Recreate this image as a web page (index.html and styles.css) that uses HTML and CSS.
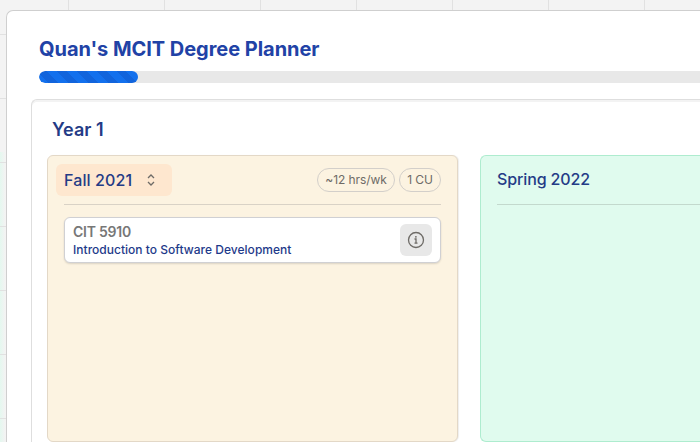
FILE: index.html
```
<!DOCTYPE html>
<html lang="en">
<head>
<meta charset="utf-8">
<title>Quan's MCIT Degree Planner</title>
<link rel="stylesheet" href="styles.css">
</head>
<body>
<main class="planner">
  <h1 class="title">Quan's MCIT Degree Planner</h1>
  <div class="progress"><div class="progress-fill"></div></div>
  <section class="year">
    <h2 class="year-title">Year 1</h2>
    <div class="terms">
      <article class="term term-fall">
        <header class="term-head">
          <button class="term-picker"><span class="term-name">Fall 2021</span>
            <svg class="chevrons" width="10" height="14" viewBox="0 0 10 14"><path d="M2 5 5 2 8 5M2 9 5 12 8 9"/></svg>
          </button>
          <div class="badges"><span class="badge hours">~12 hrs/wk</span><span class="badge units">1 CU</span></div>
        </header>
        <div class="course">
          <div class="course-text">
            <div class="code">CIT 5910</div>
            <div class="name">Introduction to Software Development</div>
          </div>
          <button class="info" aria-label="Info">
            <svg width="18" height="18" viewBox="0 0 18 18"><circle cx="9" cy="9" r="7.5"/><path d="M7.5 8H9v4M7.5 12.2h3"/><circle class="dot" cx="8.9" cy="5.8" r=".9"/></svg>
          </button>
        </div>
      </article>
      <article class="term term-spring">
        <header class="term-head"><span class="term-name">Spring 2022</span></header>
      </article>
    </div>
  </section>
</main>
</body>
</html>
```
FILE: styles.css
```
* { box-sizing: border-box; }
body {
  margin: 0;
  width: 700px;
  height: 442px;
  overflow: hidden;
  padding: 10px 0 0 6px;
  font-family: Inter, "Liberation Sans", sans-serif;
  color: #243b86;
  background-color: #f3f3f3;
  background-image:
    linear-gradient(90deg, #e1e1e1 1px, transparent 1px),
    linear-gradient(#e1e1e1 1px, transparent 1px),
    linear-gradient(90deg, #e4f8ef, #f3f3f3 5px);
  background-repeat: repeat, repeat, no-repeat;
  background-size: 96px 64px, 96px 64px, 6px 290px;
  background-position: 68px 34px, 68px 34px, 0 152px;
}
h1, h2 { margin: 0; }
button { border: 0; padding: 0; font: inherit; color: inherit; }
svg { fill: none; stroke: #6e6b67; stroke-width: 1.3; }
.planner {
  width: 694px;
  height: 432px;
  overflow: hidden;
  padding: 25px 0 0 32px;
  background: #fff;
  border: 1px solid #cfcfcf;
  border-width: 1px 0 0 1px;
  border-radius: 7px 0 0 0;
}
.title {
  height: 26px;
  font-size: 20px;
  line-height: 26px;
  font-weight: 650;
  letter-spacing: -.04px;
  color: #2142a6;
  white-space: nowrap;
}
.progress { height: 12px; margin-top: 9px; background: #e8e8e8; border-radius: 6px 0 0 6px; overflow: hidden; }
.progress-fill {
  width: 99px;
  height: 12px;
  border-radius: 6px;
  background: repeating-linear-gradient(45deg, #1270ed 0 7px, #1164dc 7px 14px);
}
.year {
  height: 343px;
  margin: 16px 0 0 -8px;
  padding: 17px 0 0 15px;
  border: 1px solid #dedede;
  border-width: 1px 0 0 1px;
  border-radius: 6px 0 0 0;
  box-shadow: inset 0 2px 0 #f3f3f3;
}
.year-title { height: 24px; padding-top: 1px; margin-left: 5px; font-size: 18px; line-height: 24px; font-weight: 600; white-space: nowrap; }
.terms { display: flex; gap: 22px; margin-top: 14px; }
.term { flex: none; width: 411px; height: 287px; padding: 8px 16px; border: 1px solid; border-radius: 6px; }
.term-fall { background: #fcf3e1; border-color: #e3d8c7; box-shadow: 1px 0 1px #eee; }
.term-spring { width: 220px; padding-right: 0; background: #e0fbee; border-color: #aeeccf; border-right: 0; border-radius: 6px 0 0 6px; }
.term-head { display: flex; justify-content: space-between; height: 41px; border-bottom: 1px solid #d9d2c6; }
.term-spring .term-head { border-color: #c3d9cd; }
.term-name { font-size: 16px; line-height: 31px; font-weight: 500; white-space: nowrap; }
.term-picker .term-name { letter-spacing: .12px; }
.term-spring .term-name { letter-spacing: -.12px; }
.term-picker {
  display: flex;
  align-items: center;
  justify-content: space-between;
  width: 116px;
  height: 32px;
  margin-left: -8px;
  padding: 0 16px 0 8px;
  background: #fee7cf;
  border-radius: 6px;
}
.badges { display: flex; gap: 4px; padding-top: 4px; }
.badge {
  height: 24px;
  border: 1px solid #d3cfca;
  border-radius: 12px;
  font-size: 12px;
  line-height: 22px;
  letter-spacing: -.08px;
  text-align: center;
  color: #6e6b67;
  white-space: nowrap;
}
.hours { width: 78px; }
.units { width: 42px; }
.course {
  display: flex;
  justify-content: space-between;
  height: 46px;
  margin-top: 12px;
  padding: 6px 8px;
  background: #fff;
  border: 1px solid #d0d0d3;
  border-radius: 6px;
  box-shadow: 0 1px 2px #0002;
}
.code { height: 17px; font-size: 14px; line-height: 16px; font-weight: 600; letter-spacing: -.25px; color: #777; }
.name { height: 16px; font-size: 12px; line-height: 17px; font-weight: 500; letter-spacing: .02px; color: #1e3a8a; white-space: nowrap; }
.info { display: flex; align-items: center; justify-content: center; width: 32px; height: 32px; background: #e8e8e8; border-radius: 6px; }
.dot { fill: #6e6b67; stroke: none; }
```
